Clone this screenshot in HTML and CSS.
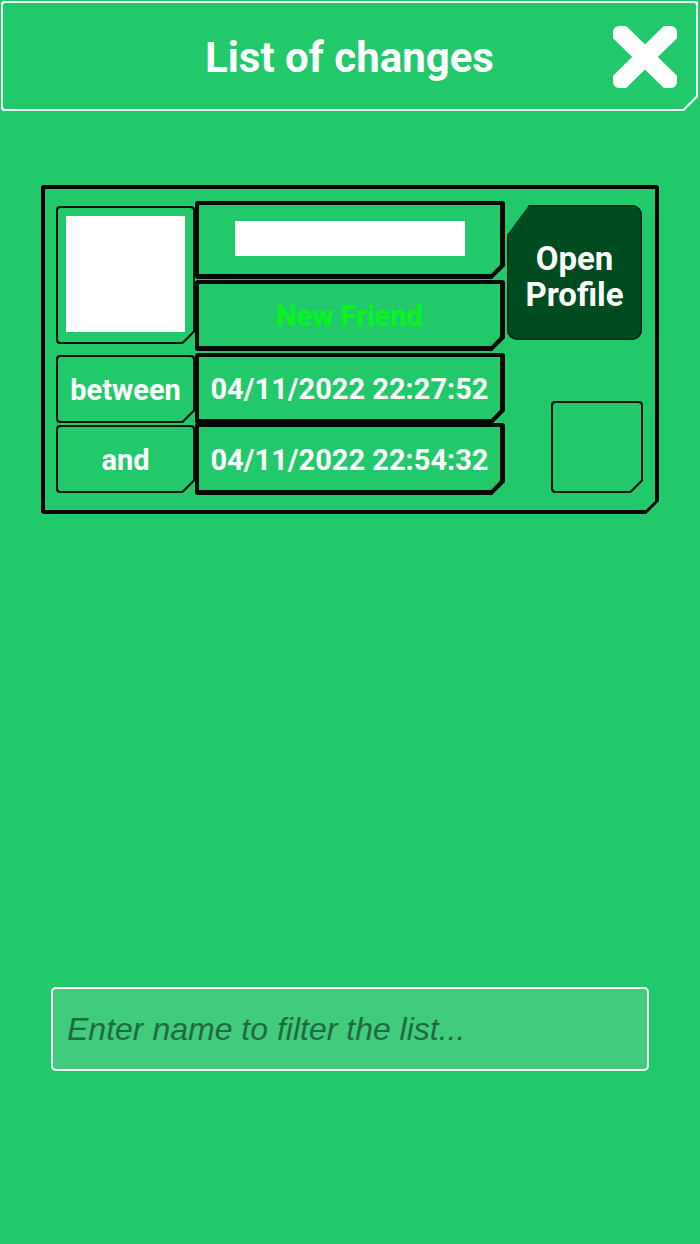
FILE: index.html
```html
<!DOCTYPE html>
<html lang="en">
<head>
<meta charset="utf-8">
<title>List of changes</title>
<link rel="stylesheet" href="styles.css">
</head>
<body>
<div class="page">
  <header class="header">
    <div class="header-inner">
      <span></span>
      <h1 class="title">List of changes</h1>
      <button class="close" aria-label="Close">
        <svg viewBox="0 0 64 62" width="64" height="62">
          <g stroke="#fff" stroke-width="18" stroke-linecap="butt">
            <line x1="-8" y1="-8" x2="72" y2="70"/>
            <line x1="72" y1="-8" x2="-8" y2="70"/>
          </g>
        </svg>
      </button>
    </div>
  </header>

  <section class="card">
    <div class="card-inner">
      <div class="thin avatar"><div class="thin-inner"><div class="avatar-img"></div></div></div>

      <div class="field f-name"><div class="field-inner"><div class="name-bar"></div></div></div>
      <div class="field f-status"><div class="field-inner"><span class="status">New Friend</span></div></div>

      <button class="open-btn">Open<br>Profile</button>

      <div class="thin label l-between"><div class="thin-inner"><span>between</span></div></div>
      <div class="field f-date1"><div class="field-inner"><span>04/11/2022 22:27:52</span></div></div>

      <div class="thin label l-and"><div class="thin-inner"><span>and</span></div></div>
      <div class="field f-date2"><div class="field-inner"><span>04/11/2022 22:54:32</span></div></div>

      <div class="thin small-box"><div class="thin-inner"></div></div>
    </div>
  </section>

  <div class="filter">
    <input class="filter-input" type="text" placeholder="Enter name to filter the list...">
  </div>
</div>
</body>
</html>
```

FILE: styles.css
```css
html, body {
  margin: 0;
  padding: 0;
}
body {
  background: #22c96b;
  width: 700px;
  height: 1244px;
  overflow: hidden;
  font-family: Roboto, "Liberation Sans", sans-serif;
  font-weight: bold;
  color: #fff;
}
.page {
  display: flex;
  flex-direction: column;
}

/* Header */
.header {
  margin: 1px 2px 0 1px;
  height: 110px;
  background: #f2fff6;
  padding: 2px;
  box-sizing: border-box;
  border-radius: 3px;
  clip-path: polygon(0 0, 100% 0, 100% calc(100% - 14px), calc(100% - 14px) 100%, 0 100%);
}
.header-inner {
  height: 100%;
  background: #22c96b;
  border-radius: 2px;
  clip-path: polygon(0 0, 100% 0, 100% calc(100% - 13px), calc(100% - 13px) 100%, 0 100%);
  display: grid;
  grid-template-columns: 1fr auto 1fr;
  align-items: center;
}
.title {
  margin: 0;
  font-size: 42px;
  font-weight: bold;
  color: #fff;
  padding-top: 3px;
  white-space: nowrap;
}
.close {
  justify-self: end;
  margin-right: 19px;
  margin-top: 2px;
  background: none;
  border: 0;
  padding: 0;
  width: 64px;
  height: 62px;
  display: block;
}
.close svg {
  display: block;
  border-radius: 6px;
}

/* Card */
.card {
  margin: 74px 41px 0 41px;
  width: 618px;
  height: 329px;
  box-sizing: border-box;
  background: #000;
  padding: 4px;
  border-radius: 3px;
  clip-path: polygon(0 0, 100% 0, 100% calc(100% - 13px), calc(100% - 13px) 100%, 0 100%);
}
.card-inner {
  height: 100%;
  box-sizing: border-box;
  background: #22c96b;
  clip-path: polygon(0 0, 100% 0, 100% calc(100% - 9px), calc(100% - 9px) 100%, 0 100%);
  padding: 12px 12px 0 11px;
  display: grid;
  grid-template-columns: 139px 310px 1fr;
  grid-template-rows: 78px 73px 71px 72px;
}

/* Thick fields */
.field {
  background: #020805;
  padding: 4px 5px 5px 4px;
  border-radius: 3px;
  clip-path: polygon(0 0, 100% 0, 100% calc(100% - 13px), calc(100% - 13px) 100%, 0 100%);
}
.field-inner {
  height: 100%;
  background: #22c96b;
  clip-path: polygon(0 0, 100% 0, 100% calc(100% - 9px), calc(100% - 9px) 100%, 0 100%);
  display: flex;
  align-items: center;
  justify-content: center;
  font-size: 29px;
  white-space: nowrap;
  padding-top: 2px;
  box-sizing: border-box;
}
.f-name { grid-column: 2; grid-row: 1; height: 78px; box-sizing: border-box; }
.f-status { grid-column: 2; grid-row: 2; height: 71px; margin-top: 1px; box-sizing: border-box; }
.f-date1 { grid-column: 2; grid-row: 3; height: 71px; margin-top: 1px; box-sizing: border-box; }
.f-date2 { grid-column: 2; grid-row: 4; height: 72px; box-sizing: border-box; }
.f-name .field-inner { padding-top: 0; }
.name-bar {
  width: 230px;
  height: 35px;
  background: #fff;
  margin-top: -2px;
}
.status {
  color: #0af51c;
  font-size: 29px;
}

/* Thin frames */
.thin {
  background: #07140c;
  padding: 2px;
  box-sizing: border-box;
  border-radius: 4px;
  clip-path: polygon(0 0, 100% 0, 100% calc(100% - 12px), calc(100% - 12px) 100%, 0 100%);
}
.thin-inner {
  height: 100%;
  box-sizing: border-box;
  background: #22c96b;
  border-radius: 3px;
  clip-path: polygon(0 0, 100% 0, 100% calc(100% - 11px), calc(100% - 11px) 100%, 0 100%);
  display: flex;
  align-items: center;
  justify-content: center;
}
.avatar {
  grid-column: 1;
  grid-row: 1 / 3;
  margin-top: 5px;
  height: 138px;
}
.avatar .thin-inner {
  padding: 8px 8px 10px 8px;
}
.avatar-img {
  width: 100%;
  height: 100%;
  background: #fff;
}
.label {
  grid-column: 1;
  height: 68px;
  font-size: 29px;
  white-space: nowrap;
}
.label .thin-inner { padding-top: 2px; }
.l-between { grid-row: 3; margin-top: 3px; }
.l-and { grid-row: 4; margin-top: 2px; }

.small-box {
  grid-column: 3;
  grid-row: 3 / 5;
  align-self: end;
  justify-self: end;
  width: 92px;
  height: 92px;
  margin-bottom: 2px;
}

/* Open profile button */
.open-btn {
  grid-column: 3;
  grid-row: 1 / 3;
  justify-self: end;
  align-self: start;
  margin-top: 4px;
  margin-right: 1px;
  width: 135px;
  height: 135px;
  border: 0;
  background: #004c20;
  color: #fff;
  font-family: inherit;
  font-weight: bold;
  font-size: 33px;
  line-height: 36px;
  padding: 8px 0 0 0;
  border-radius: 0 10px 10px 10px;
  box-shadow: inset 0 0 0 1.5px #0b2414;
  clip-path: polygon(22px 0, 100% 0, 100% 100%, 0 100%, 0 30px);
}

/* Filter input */
.filter {
  margin: 473px 51px 0 51px;
}
.filter-input {
  display: block;
  width: 598px;
  height: 84px;
  box-sizing: border-box;
  border: 2px solid #f4fff8;
  border-radius: 5px;
  background: #41cb7c;
  padding: 0 14px;
  font-family: "Liberation Sans", Arial, sans-serif;
  font-style: italic;
  font-weight: normal;
  font-size: 32px;
  color: #1d6a3d;
  outline: none;
}
.filter-input::placeholder {
  color: #1f6b3f;
  opacity: 1;
}
```
